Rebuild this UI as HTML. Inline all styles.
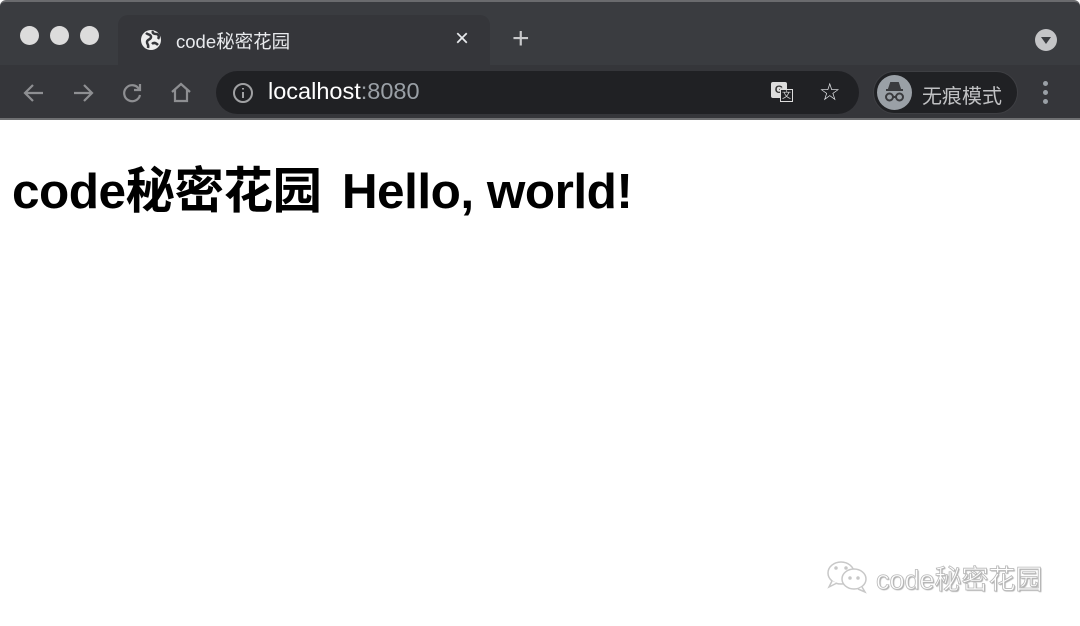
<!DOCTYPE html>
<html><head><meta charset="utf-8"><style>
*{margin:0;padding:0;box-sizing:border-box}
body{width:1080px;height:626px;overflow:hidden;background:#fff;font-family:"Liberation Sans","Noto Sans CJK SC",sans-serif;position:relative}
.frame{position:absolute;left:0;top:0;width:1080px;height:66px;background:#3a3c40;border-top:2px solid #6a6b6e;border-radius:6px 6px 0 0}
.dot{position:absolute;top:24px;width:19px;height:19px;border-radius:50%;background:#dcdcdc}
.tab{position:absolute;left:118px;top:13px;width:372px;height:53px;background:#35363a;border-radius:10px 10px 0 0}
.toolbar{position:absolute;left:0;top:65px;width:1080px;height:55px;background:#35363a;border-bottom:2px solid #6f7072}
.omni{position:absolute;left:216px;top:6px;width:643px;height:43px;background:#202124;border-radius:22px}
.inc{position:absolute;left:873px;top:6px;width:145px;height:43px;background:#202124;border-radius:22px;border:1px solid #3e3f43}
h1{position:absolute;left:12px;top:152px;font-size:49.5px;font-weight:bold;color:#000;letter-spacing:-0.5px;white-space:nowrap}
</style></head><body>
<div class="frame">
<div class="dot" style="left:20px"></div><div class="dot" style="left:50px"></div><div class="dot" style="left:80px"></div>
<div class="tab">
<svg style="position:absolute;left:22px;top:14px" width="22" height="22" viewBox="0 0 22 22"><circle cx="11" cy="11" r="10" fill="#eee"/><path d="M6 4c2 2 5 1 5 4s-4 2-4 5 2 2 1 6M13 2c-1 2 1 3 3 3s4 2 2 5M12 15c2-2 4-1 6 1" stroke="#35363a" stroke-width="2.5" fill="none"/></svg>
<div style="position:absolute;left:58px;top:13px;color:#e8eaed;font-size:18.5px">code秘密花园</div>
<div style="position:absolute;left:337px;top:10px;color:#e8eaed;font-size:24px">×</div>
</div>
<div style="position:absolute;left:512px;top:20px;color:#c8c9cb;font-size:30px;font-weight:300">+</div>
<div style="position:absolute;left:1035px;top:27px;width:22px;height:22px;border-radius:50%;background:#c4c5c7"><div style="position:absolute;left:6px;top:8px;border-left:5px solid transparent;border-right:5px solid transparent;border-top:7px solid #3a3c40"></div></div>
</div>
<div class="toolbar">
<svg style="position:absolute;left:22px;top:16px" width="24" height="24" viewBox="0 0 24 24" fill="none" stroke="#8e8f92" stroke-width="2.2"><path d="M21 12H4M11 4l-8 8 8 8"/></svg>
<svg style="position:absolute;left:71px;top:16px" width="24" height="24" viewBox="0 0 24 24" fill="none" stroke="#8e8f92" stroke-width="2.2"><path d="M3 12h17M13 4l8 8-8 8"/></svg>
<svg style="position:absolute;left:120px;top:16px" width="24" height="24" viewBox="0 0 24 24" fill="none" stroke="#8e8f92" stroke-width="2.2"><path d="M19 8A8 8 0 1 0 20 14"/><path d="M20 3v6h-6" /></svg>
<svg style="position:absolute;left:169px;top:15px" width="24" height="24" viewBox="0 0 24 24" fill="none" stroke="#8e8f92" stroke-width="2.2"><path d="M3 12L12 4l9 8M6 10v11h12V10"/></svg>
<div class="omni">
<svg style="position:absolute;left:16px;top:11px" width="22" height="22" viewBox="0 0 22 22" fill="none" stroke="#a0a1a3" stroke-width="2"><circle cx="11" cy="11" r="9"/><path d="M11 10v6M11 6v1.5"/></svg>
<div style="position:absolute;left:52px;top:7px;font-size:23.5px;color:#fff">localhost<span style="color:#9aa0a6">:8080</span></div>
<div style="position:absolute;left:555px;top:11px;width:16px;height:16px;background:#ddd;border-radius:2px;font-size:11px;font-weight:bold;color:#333;text-align:center;line-height:16px">G</div>
<div style="position:absolute;left:564px;top:18px;width:13px;height:13px;border:1.5px solid #ddd;background:#202124;font-size:9px;color:#ddd;text-align:center;line-height:10px">文</div>
<div style="position:absolute;left:603px;top:7px;font-size:24px;color:#e8eaed;font-family:'DejaVu Sans',sans-serif">☆</div>
</div>
<div class="inc">
<div style="position:absolute;left:3px;top:3px;width:35px;height:35px;border-radius:50%;background:#9aa0a6">
<svg width="35" height="35" viewBox="0 0 35 35" fill="none" stroke="#3a3b3e" stroke-width="2"><path d="M9 15h17" /><path d="M12 14l2-6h7l2 6z" fill="#3a3b3e"/><circle cx="12.5" cy="22" r="3.5"/><circle cx="22.5" cy="22" r="3.5"/><path d="M16 22h3"/></svg></div>
<div style="position:absolute;left:48px;top:8px;font-size:20px;color:#c0c1c3">无痕模式</div>
</div>
<div style="position:absolute;left:1043px;top:16px;width:5px;height:24px">
<div style="width:5px;height:5px;border-radius:50%;background:#9aa0a6;margin-bottom:4px"></div><div style="width:5px;height:5px;border-radius:50%;background:#9aa0a6;margin-bottom:4px"></div><div style="width:5px;height:5px;border-radius:50%;background:#9aa0a6"></div></div>
</div>
<h1>code秘密花园<span style="word-spacing:7px"> </span>Hello, world!</h1>
<svg style="position:absolute;left:826px;top:560px" width="46" height="34" viewBox="0 0 46 34" fill="#fff" stroke="#c8c8c8" stroke-width="1.5"><ellipse cx="15" cy="13" rx="13" ry="11"/><path d="M6 21l-3 6 8-4"/><ellipse cx="28" cy="19" rx="12" ry="10"/><path d="M36 27l3 5-7-3"/><circle cx="10" cy="8" r="1" fill="#bbb"/><circle cx="20" cy="8" r="1" fill="#bbb"/><circle cx="24" cy="18" r="1" fill="#bbb"/><circle cx="32" cy="18" r="1" fill="#bbb"/></svg>
<div style="position:absolute;left:876px;top:558px;font-size:27px;color:#fff;-webkit-text-stroke:0.8px #b8b8b8;text-shadow:1px 1px 1px #aaa">code秘密花园</div>
</body></html>
